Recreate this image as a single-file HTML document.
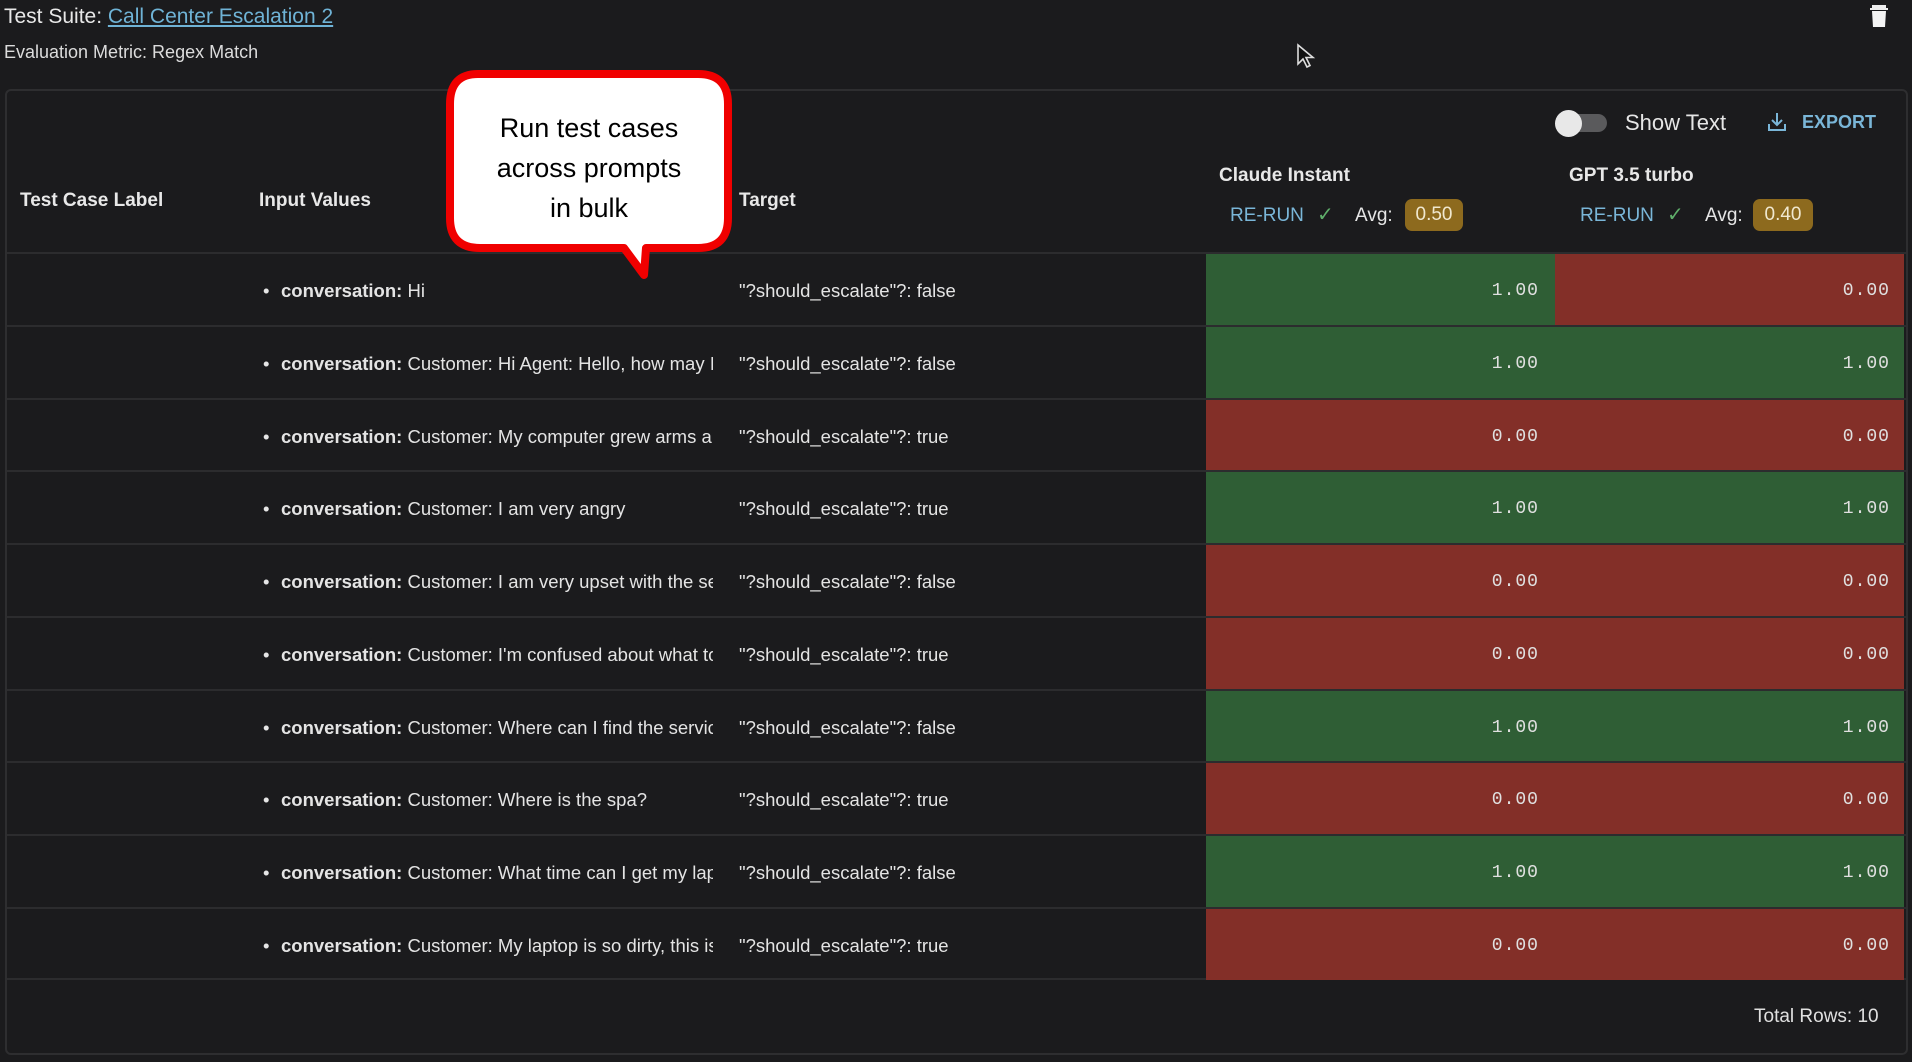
<!DOCTYPE html>
<html><head><meta charset="utf-8"><style>
*{margin:0;padding:0;box-sizing:border-box}
body{width:1912px;height:1062px;background:#1b1b1d;color:#e6e6e6;font-family:"Liberation Sans",sans-serif;position:relative;overflow:hidden}
.a{position:absolute;white-space:nowrap}
.frame{position:absolute;left:5px;top:89px;width:1903px;height:966px;border:2px solid #2e2e30;border-radius:6px}
.row{position:absolute;left:7px;width:1899px;height:73px;border-top:2px solid #2c2c2e}
.inp{position:absolute;left:274px;width:432px;overflow:hidden;font-size:18.5px;color:#e4e4e4;white-space:nowrap;line-height:73px;top:0}
.bul{position:absolute;left:256px;font-size:18.5px;line-height:73px}
.tgt{position:absolute;left:732px;font-size:18.5px;line-height:73px;color:#e4e4e4}
.c{position:absolute;top:0;height:71px;font-family:"Liberation Mono",monospace;font-size:18px;line-height:74px;text-align:right;color:#e0e0e0;letter-spacing:1px}
.G{background:#2f5e35}.R{background:#832f28}
.h{font-weight:bold;font-size:19px;color:#e8e8e8}
.blue{color:#7ab6d8}
.badge{position:absolute;background:#8d6a1e;border-radius:7px;color:#f0e8d0;font-size:19px;text-align:center;line-height:32px;height:32px}
</style></head><body>
<div class="a" style="left:4px;top:5px;font-size:21px;color:#e8e8e8">Test Suite: <span style="color:#6fb3d6;text-decoration:underline">Call Center Escalation 2</span></div>
<div class="a" style="left:4px;top:42px;font-size:18px;color:#dcdcdc">Evaluation Metric: Regex Match</div>
<svg class="a" style="left:1868px;top:3px" width="22" height="26" viewBox="0 0 22 26"><rect x="4" y="2" width="14" height="3" fill="#eee"/><rect x="2" y="5" width="18" height="2" fill="#eee"/><path d="M4 8h14l-1 16H5z" fill="#f4f4f4"/></svg>
<svg class="a" style="left:1296px;top:43px" width="20" height="26" viewBox="0 0 20 26"><path d="M2 2v19l5-5 4 8 3-1.5-4-8h7z" fill="#111" stroke="#ddd" stroke-width="1.6"/></svg>
<div class="frame"></div>
<div class="a" style="left:1559px;top:114px;width:48px;height:18px;border-radius:9px;background:#5a5a5c"></div>
<div class="a" style="left:1555px;top:110px;width:27px;height:27px;border-radius:50%;background:#e8e8e8"></div>
<div class="a" style="left:1625px;top:110px;font-size:22px;color:#e6e6e6">Show Text</div>
<svg class="a" style="left:1766px;top:111px" width="22" height="22" viewBox="0 0 22 22" fill="none" stroke="#7ab6d8" stroke-width="2"><path d="M11 2v12M6 9l5 5 5-5M3 13v6h16v-6"/></svg>
<div class="a blue" style="left:1802px;top:112px;font-size:18px;font-weight:bold">EXPORT</div>
<div class="a h" style="left:20px;top:190px">Test Case Label</div>
<div class="a h" style="left:259px;top:190px">Input Values</div>
<div class="a h" style="left:739px;top:190px">Target</div>
<div class="a h" style="left:1219px;top:165px">Claude Instant</div>
<div class="a h" style="left:1569px;top:165px">GPT 3.5 turbo</div>
<div class="a blue" style="left:1230px;top:205px;font-size:19px">RE-RUN</div>
<div class="a" style="left:1317px;top:202px;font-size:20px;color:#5fae6a">✓</div>
<div class="a" style="left:1355px;top:205px;font-size:19px">Avg:</div>
<div class="badge" style="left:1405px;top:199px;width:58px">0.50</div>
<div class="a blue" style="left:1580px;top:205px;font-size:19px">RE-RUN</div>
<div class="a" style="left:1667px;top:202px;font-size:20px;color:#5fae6a">✓</div>
<div class="a" style="left:1705px;top:205px;font-size:19px">Avg:</div>
<div class="badge" style="left:1753px;top:199px;width:60px">0.40</div>

<div class="row" style="top:252px"><span class="bul">•</span><div class="inp"><b>conversation:</b> Hi</div><div class="tgt">"?should_escalate"?: false</div><div class="c G" style="left:1199px;width:349px;padding-right:16px">1.00</div><div class="c R" style="left:1548px;width:349px;padding-right:14px">0.00</div></div>
<div class="row" style="top:325px"><span class="bul">•</span><div class="inp"><b>conversation:</b> Customer: Hi Agent: Hello, how may I help</div><div class="tgt">"?should_escalate"?: false</div><div class="c G" style="left:1199px;width:349px;padding-right:16px">1.00</div><div class="c G" style="left:1548px;width:349px;padding-right:14px">1.00</div></div>
<div class="row" style="top:398px"><span class="bul">•</span><div class="inp"><b>conversation:</b> Customer: My computer grew arms and</div><div class="tgt">"?should_escalate"?: true</div><div class="c R" style="left:1199px;width:349px;padding-right:16px">0.00</div><div class="c R" style="left:1548px;width:349px;padding-right:14px">0.00</div></div>
<div class="row" style="top:470px"><span class="bul">•</span><div class="inp"><b>conversation:</b> Customer: I am very angry</div><div class="tgt">"?should_escalate"?: true</div><div class="c G" style="left:1199px;width:349px;padding-right:16px">1.00</div><div class="c G" style="left:1548px;width:349px;padding-right:14px">1.00</div></div>
<div class="row" style="top:543px"><span class="bul">•</span><div class="inp"><b>conversation:</b> Customer: I am very upset with the service</div><div class="tgt">"?should_escalate"?: false</div><div class="c R" style="left:1199px;width:349px;padding-right:16px">0.00</div><div class="c R" style="left:1548px;width:349px;padding-right:14px">0.00</div></div>
<div class="row" style="top:616px"><span class="bul">•</span><div class="inp"><b>conversation:</b> Customer: I'm confused about what to do</div><div class="tgt">"?should_escalate"?: true</div><div class="c R" style="left:1199px;width:349px;padding-right:16px">0.00</div><div class="c R" style="left:1548px;width:349px;padding-right:14px">0.00</div></div>
<div class="row" style="top:689px"><span class="bul">•</span><div class="inp"><b>conversation:</b> Customer: Where can I find the service</div><div class="tgt">"?should_escalate"?: false</div><div class="c G" style="left:1199px;width:349px;padding-right:16px">1.00</div><div class="c G" style="left:1548px;width:349px;padding-right:14px">1.00</div></div>
<div class="row" style="top:761px"><span class="bul">•</span><div class="inp"><b>conversation:</b> Customer: Where is the spa?</div><div class="tgt">"?should_escalate"?: true</div><div class="c R" style="left:1199px;width:349px;padding-right:16px">0.00</div><div class="c R" style="left:1548px;width:349px;padding-right:14px">0.00</div></div>
<div class="row" style="top:834px"><span class="bul">•</span><div class="inp"><b>conversation:</b> Customer: What time can I get my laptop</div><div class="tgt">"?should_escalate"?: false</div><div class="c G" style="left:1199px;width:349px;padding-right:16px">1.00</div><div class="c G" style="left:1548px;width:349px;padding-right:14px">1.00</div></div>
<div class="row" style="top:907px;border-bottom:2px solid #2c2c2e"><span class="bul">•</span><div class="inp"><b>conversation:</b> Customer: My laptop is so dirty, this is</div><div class="tgt">"?should_escalate"?: true</div><div class="c R" style="left:1199px;width:349px;padding-right:16px">0.00</div><div class="c R" style="left:1548px;width:349px;padding-right:14px">0.00</div></div>

<div class="a" style="left:1754px;top:1006px;font-size:19px;color:#e0e0e0">Total Rows: 10</div>

<svg class="a" style="left:440px;top:66px" width="300" height="220" viewBox="440 66 300 220">
<path d="M478 74 H698 Q728 74 728 104 V218 Q728 248 698 248 H646 L644 275 L624 248 H480 Q450 248 450 218 V104 Q450 74 478 74 Z" fill="#fff" stroke="#f00000" stroke-width="8" stroke-linejoin="round"/>
</svg>
<div class="a" style="left:450px;top:108px;width:278px;text-align:center;font-size:27px;line-height:40px;color:#000;white-space:normal">Run test cases<br>across prompts<br>in bulk</div>
</body></html>
